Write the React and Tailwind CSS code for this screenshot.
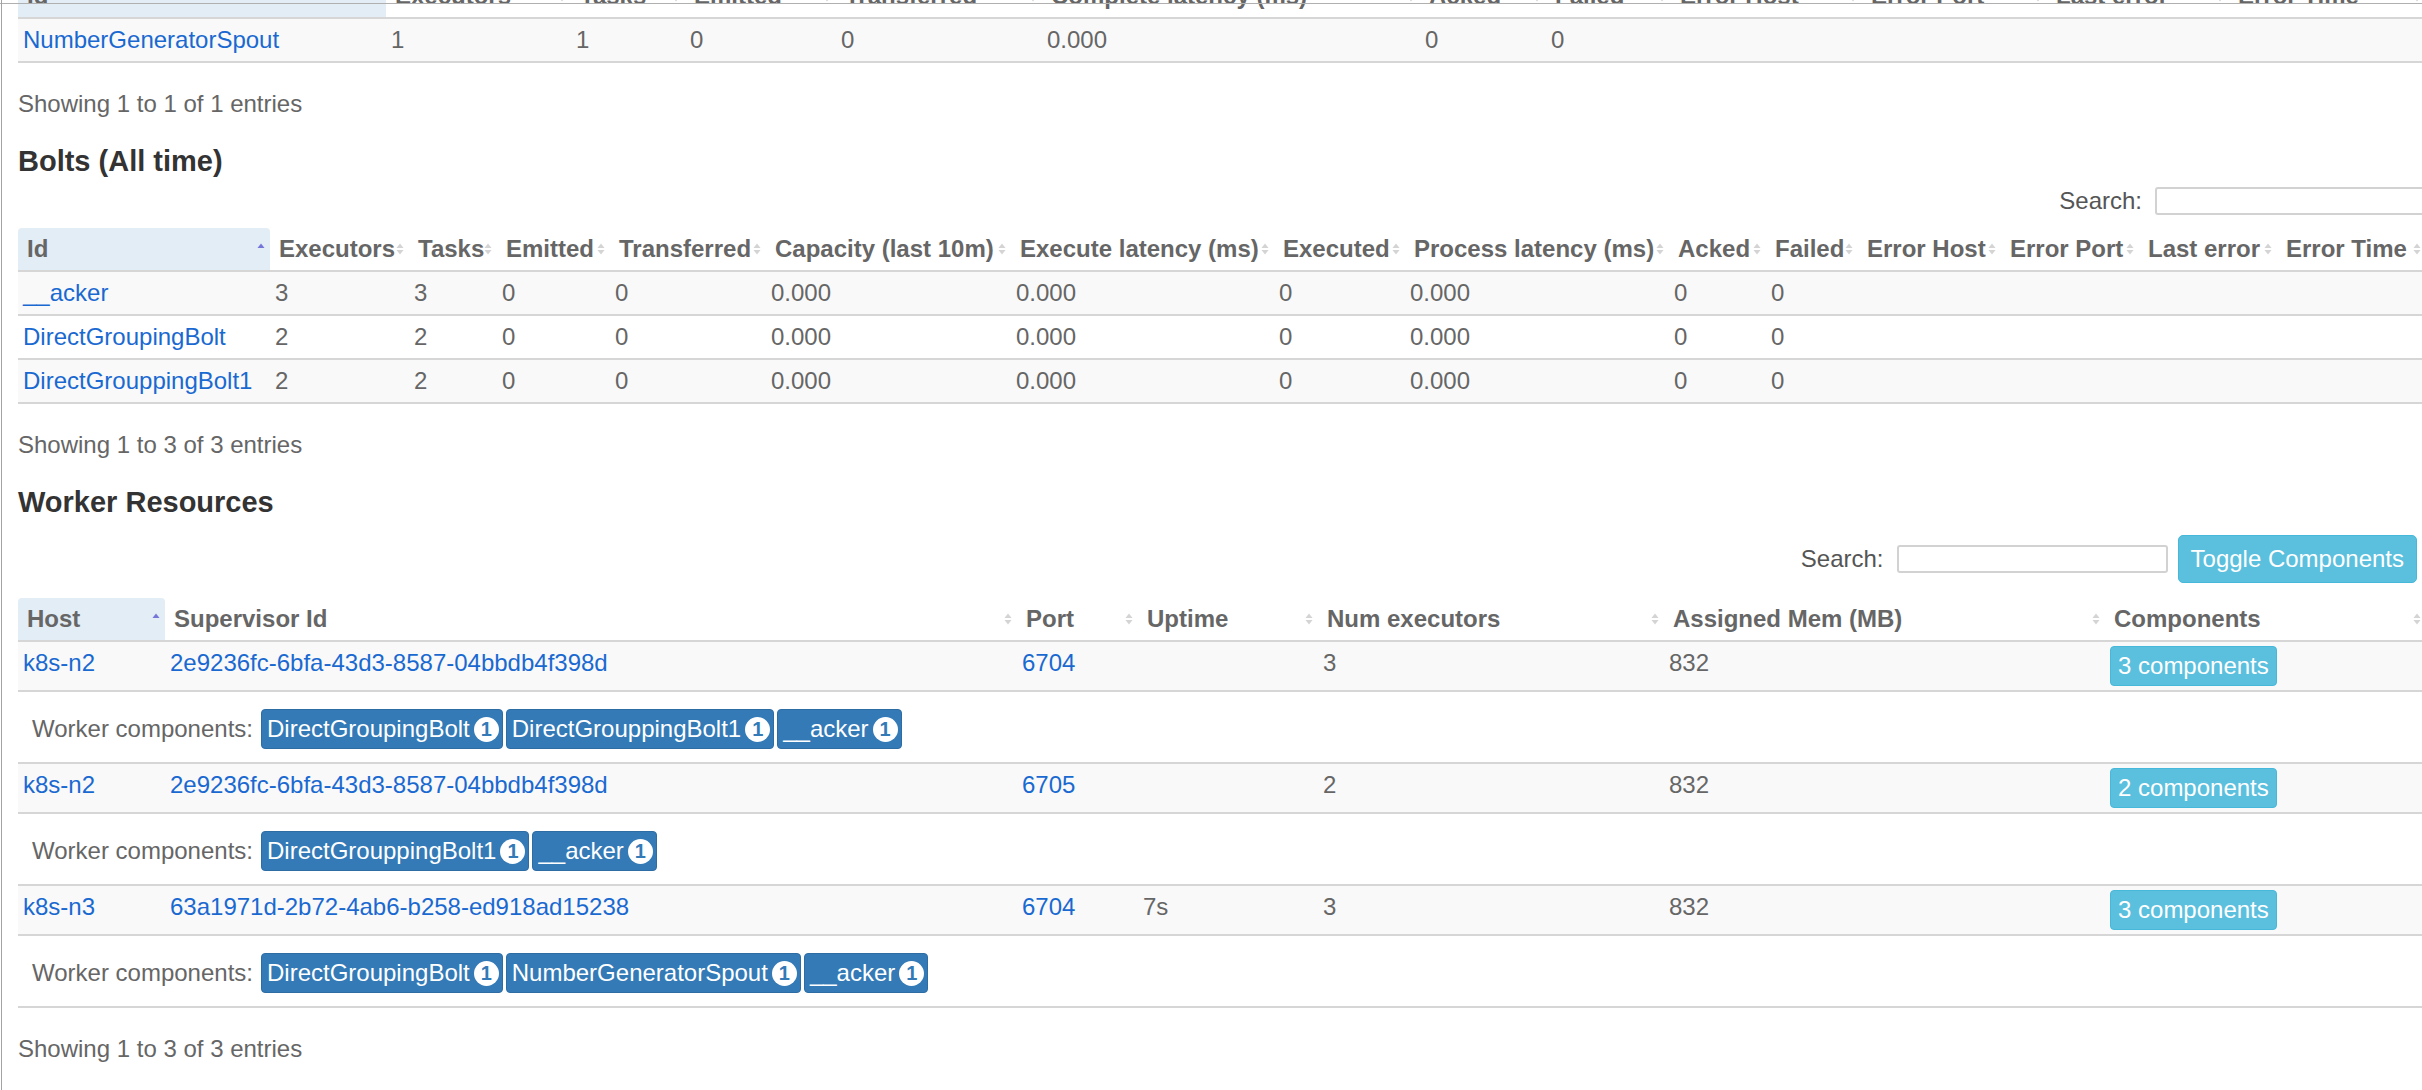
import React from "react";

const border = "border-b-2 border-[#d6d6d6]";

const spoutCols = ["w-[368px]", "w-[185px]", "w-[114px]", "w-[151px]", "w-[206px]", "w-[378px]", "w-[126px]", "w-[125px]", "w-[191px]", "w-[185px]", "w-[182px]", "w-[197px]"];
const spoutHeads = ["Id", "Executors", "Tasks", "Emitted", "Transferred", "Complete latency (ms)", "Acked", "Failed", "Error Host", "Error Port", "Last error", "Error Time"];

const boltCols = ["w-[252px]", "w-[139px]", "w-[88px]", "w-[113px]", "w-[156px]", "w-[245px]", "w-[263px]", "w-[131px]", "w-[264px]", "w-[97px]", "w-[92px]", "w-[143px]", "w-[138px]", "w-[138px]", "w-[149px]"];
const boltHeads = ["Id", "Executors", "Tasks", "Emitted", "Transferred", "Capacity (last 10m)", "Execute latency (ms)", "Executed", "Process latency (ms)", "Acked", "Failed", "Error Host", "Error Port", "Last error", "Error Time"];
const bolts = ["__acker", "DirectGroupingBolt", "DirectGrouppingBolt1"];

const workerCols = ["w-[147px]", "w-[852px]", "w-[121px]", "w-[180px]", "w-[346px]", "w-[441px]", "w-[321px]"];
const workerHeads = ["Host", "Supervisor Id", "Port", "Uptime", "Num executors", "Assigned Mem (MB)", "Components"];
const workers = [
   { host: "k8s-n2", sup: "2e9236fc-6bfa-43d3-8587-04bbdb4f398d", port: "6704", uptime: "", exec: "3", mem: "832", comps: ["DirectGroupingBolt", "DirectGrouppingBolt1", "__acker"] },
   { host: "k8s-n2", sup: "2e9236fc-6bfa-43d3-8587-04bbdb4f398d", port: "6705", uptime: "", exec: "2", mem: "832", comps: ["DirectGrouppingBolt1", "__acker"] },
   { host: "k8s-n3", sup: "63a1971d-2b72-4ab6-b258-ed918ad15238", port: "6704", uptime: "7s", exec: "3", mem: "832", comps: ["DirectGroupingBolt", "NumberGeneratorSpout", "__acker"] },
];

const SortIcon = ({ asc }) => (
   <svg width="8" height="14" viewBox="0 0 8 14" className="absolute right-[5px] top-1/2 -translate-y-1/2">
      {asc ? (
         <path d="M0.5 6 L4 1.5 L7.5 6 Z" fill="#7676d9" />
      ) : (
         <>
            <path d="M0.5 6 L4 1.5 L7.5 6 Z" fill="#d4d4d4" />
            <path d="M0.5 8 L4 12.5 L7.5 8 Z" fill="#d4d4d4" />
         </>
      )}
   </svg>
);

const Head = ({ cols, heads }) => (
   <>
      <colgroup>
         {cols.map((c, i) => (
            <col key={i} className={c} />
         ))}
      </colgroup>
      <thead>
         <tr>
            {heads.map((h, i) => (
               <th
                  key={h}
                  className={`relative text-left font-bold text-[#666] pl-[9px] pr-[18px] pt-[4px] pb-[4px] leading-[34px] whitespace-nowrap overflow-hidden ${border} ${
                     i === 0 ? "bg-[#e3edf5] rounded-t-[4px]" : ""
                  }`}
               >
                  {h}
                  <SortIcon asc={i === 0} />
               </th>
            ))}
         </tr>
      </thead>
   </>
);

const Cell = ({ children, blue, white }) => (
   <td
      className={`align-top pl-[5px] py-[4px] leading-[34px] whitespace-nowrap ${border} ${blue ? "text-[#1a69d1]" : "text-[#666]"} ${
         white ? "bg-white" : "bg-[#f9f9f9]"
      }`}
   >
      {children}
   </td>
);

const Showing = ({ text }) => <div className="mt-[24px] leading-[34px] text-[#666]">{text}</div>;

const Search = ({ children }) => (
   <div className="flex items-center">
      <span className="text-[#555] mr-[13px]">Search:</span>
      <div className="w-[271px] h-[28px] border-2 border-[#d2d2d2] rounded-[3px] bg-white shrink-0" />
      {children}
   </div>
);

const Badge = ({ name }) => (
   <span className="flex items-center h-[40px] pl-[5px] pr-[3px] bg-[#337ab7] border border-[#2e6da4] rounded-[4px] text-white leading-[38px]">
      {name}
      <span className="ml-[4px] w-[25px] h-[25px] rounded-full bg-white text-[#337ab7] text-[20px] font-bold leading-[25px] text-center">
         1
      </span>
   </span>
);

export default function App() {
   return (
      <div className="relative w-[2422px] h-[1090px] overflow-hidden bg-white text-[24px] font-['Liberation_Sans',Arial,Helvetica,sans-serif]">
         <div className="ml-[18px] w-[2408px]">
            <table className="table-fixed border-separate border-spacing-0 w-full mt-[-25px]">
               <Head cols={spoutCols} heads={spoutHeads} />
               <tbody>
                  <tr>
                     <Cell blue>NumberGeneratorSpout</Cell>
                     {["1", "1", "0", "0", "0.000", "0", "0", "", "", "", ""].map((v, i) => (
                        <Cell key={i}>{v}</Cell>
                     ))}
                  </tr>
               </tbody>
            </table>
            <Showing text="Showing 1 to 1 of 1 entries" />

            <h2 className="mt-[20px] text-[29px] font-bold leading-[40px] text-[#333]">Bolts (All time)</h2>
            <div className="mt-[5px] h-[30px] flex justify-end items-center">
               <Search />
            </div>
            <table className="table-fixed border-separate border-spacing-0 w-full mt-[12px]">
               <Head cols={boltCols} heads={boltHeads} />
               <tbody>
                  {bolts.map((b, r) => (
                     <tr key={b}>
                        <Cell blue white={r === 1}>
                           {b}
                        </Cell>
                        {["2", "2", "0", "0", "0.000", "0.000", "0", "0.000", "0", "0", "", "", "", ""].map((v, i) => (
                           <Cell key={i} white={r === 1}>
                              {r === 0 && i < 2 ? "3" : v}
                           </Cell>
                        ))}
                     </tr>
                  ))}
               </tbody>
            </table>
            <Showing text="Showing 1 to 3 of 3 entries" />

            <h2 className="mt-[20px] text-[29px] font-bold leading-[40px] text-[#333]">Worker Resources</h2>
            <div className="mt-[13px] h-[48px] flex justify-end items-center pr-[9px]">
               <Search>
                  <button className="ml-[10px] h-[48px] px-[12px] bg-[#5bc0de] border border-[#46b8da] rounded-[5px] text-white leading-[46px]">
                     Toggle Components
                  </button>
               </Search>
            </div>
            <table className="table-fixed border-separate border-spacing-0 w-full mt-[15px]">
               <Head cols={workerCols} heads={workerHeads} />
               <tbody>
                  {workers.map((w, r) => (
                     <React.Fragment key={r}>
                        <tr>
                           <Cell blue>{w.host}</Cell>
                           <Cell blue>{w.sup}</Cell>
                           <Cell blue>{w.port}</Cell>
                           <Cell>{w.uptime}</Cell>
                           <Cell>{w.exec}</Cell>
                           <Cell>{w.mem}</Cell>
                           <Cell>
                              <span className="block w-fit h-[40px] px-[7px] bg-[#5bc0de] border border-[#46b8da] rounded-[4px] text-white leading-[38px]">
                                 {w.comps.length} components
                              </span>
                           </Cell>
                        </tr>
                        <tr>
                           <td colSpan={7} className={`bg-white pl-[14px] pt-[17px] pb-[13px] ${border}`}>
                              <div className="flex items-center">
                                 <span className="text-[#666] leading-[34px] mr-[8px]">Worker components:</span>
                                 <div className="flex gap-[3px]">
                                    {w.comps.map((c) => (
                                       <Badge key={c} name={c} />
                                    ))}
                                 </div>
                              </div>
                           </td>
                        </tr>
                     </React.Fragment>
                  ))}
               </tbody>
            </table>
            <Showing text="Showing 1 to 3 of 3 entries" />
         </div>

         <div className="absolute top-[3px] left-0 w-full h-[1px] bg-[#b0b0b0]" />
         <div className="absolute top-0 left-[1px] h-full w-[1px] bg-[#a3a3a3]" />
      </div>
   );
}
